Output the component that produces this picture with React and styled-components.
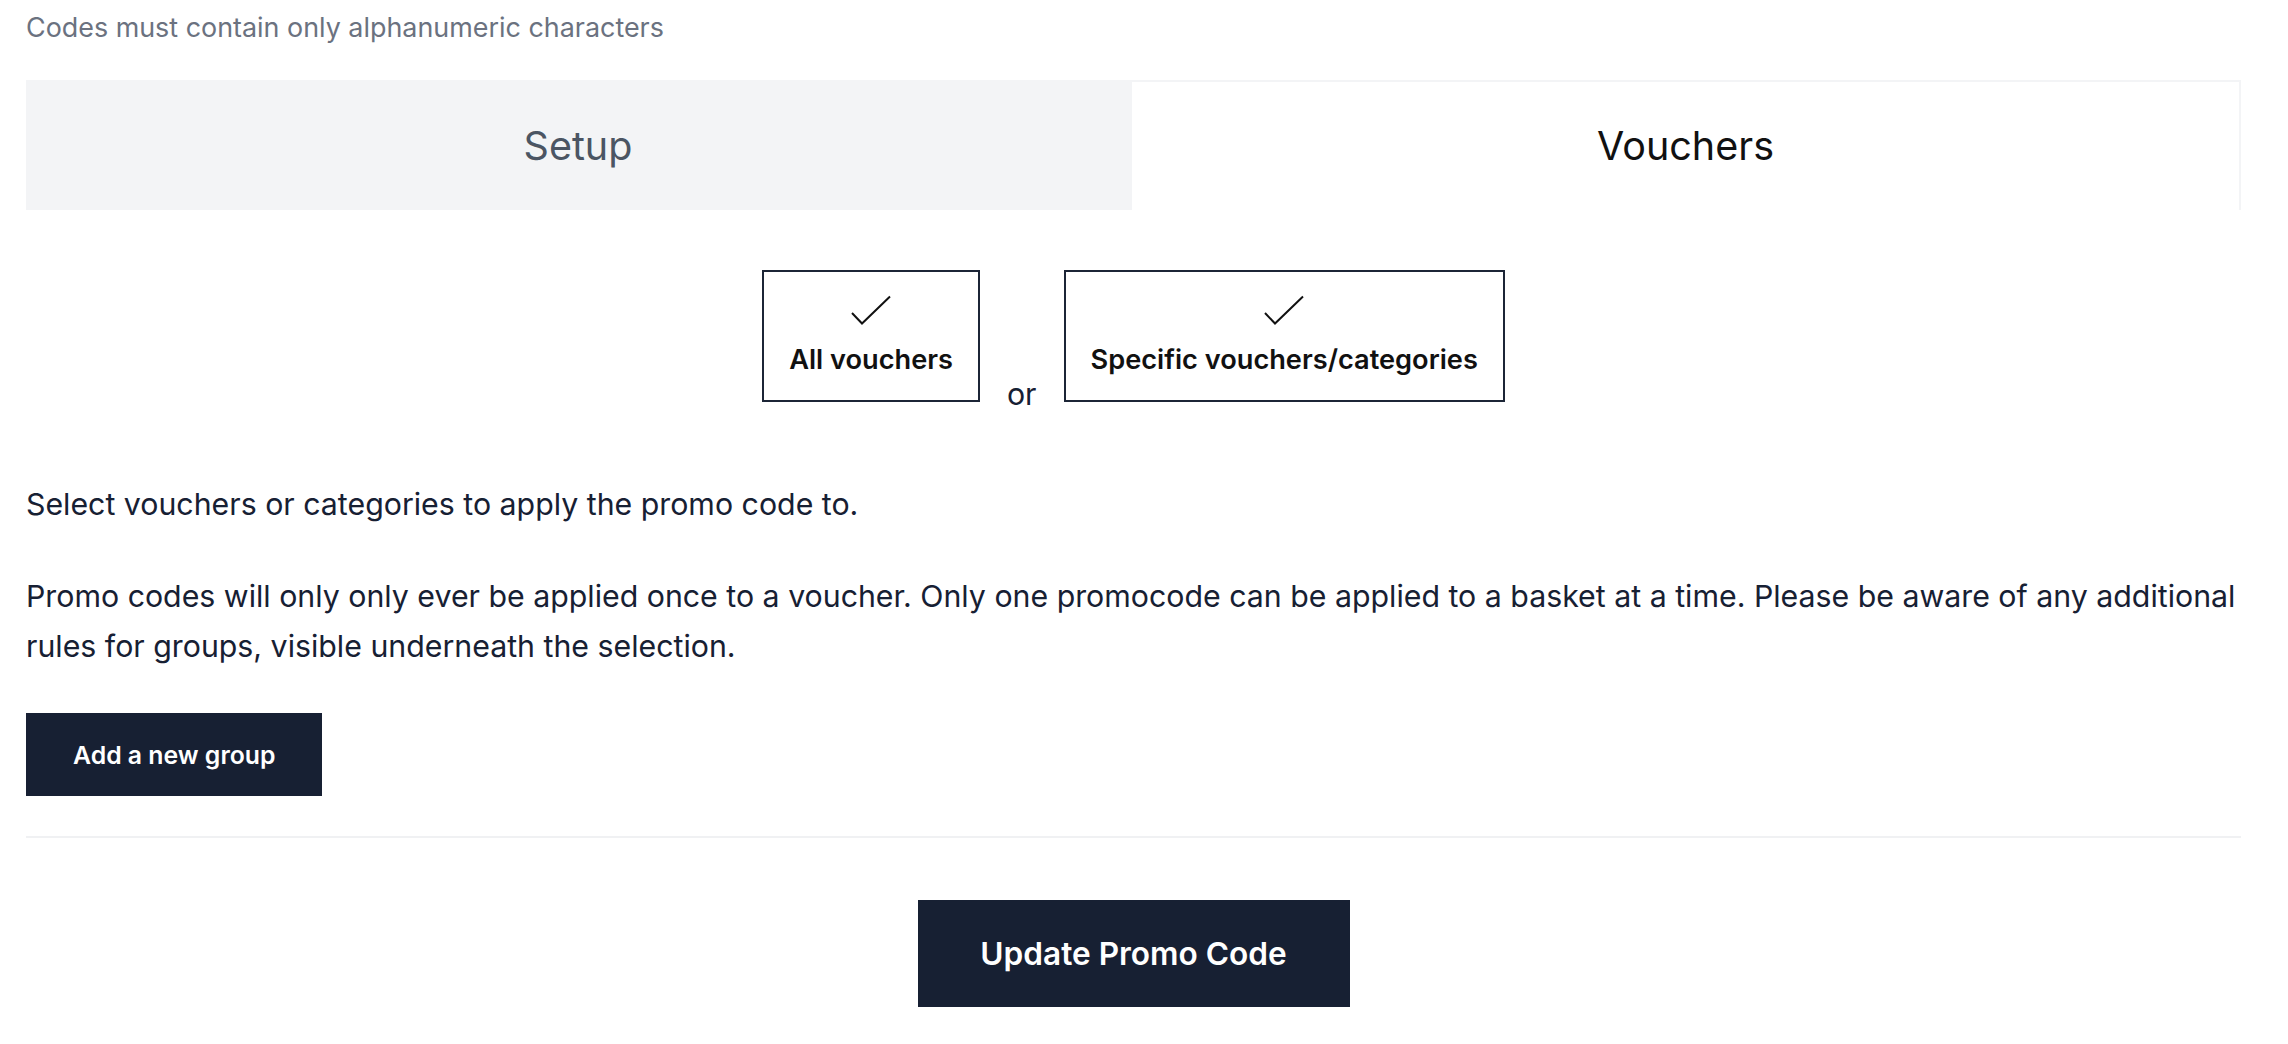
import styled, { createGlobalStyle } from 'styled-components';

const GlobalStyle = createGlobalStyle`
    html, body {
        margin: 0;
        padding: 0;
        background: #ffffff;
    }

    body {
        font-family: Inter, "Noto Sans", "Liberation Sans", sans-serif;
        color: #172033;
    }

    * {
        box-sizing: border-box;
    }
`;

const Page = styled.div`
    width: 2288px;
    padding: 8px 47px 40px 26px;
`;

const Hint = styled.p`
    margin: 0;
    font-size: 26.9px;
    line-height: 38px;
    color: #6b7280;
`;

const Tabs = styled.div`
    display: grid;
    grid-template-columns: 1106px 1fr;
    margin-top: 34px;
`;

const Tab = styled.button`
    height: 130px;
    display: flex;
    align-items: center;
    justify-content: center;
    font-family: inherit;
    font-size: 39.5px;
    padding: 0;
    cursor: pointer;
    background: ${(p) => (p.$active ? '#ffffff' : '#f3f4f6')};
    color: ${(p) => (p.$active ? '#111111' : '#4b5563')};
    border: none;
    border-top: 2px solid ${(p) => (p.$active ? '#f3f4f6' : 'transparent')};
    border-right: 2px solid ${(p) => (p.$active ? '#f3f4f6' : 'transparent')};
`;

const ChoiceRow = styled.div`
    display: flex;
    justify-content: center;
    align-items: flex-end;
    gap: 27px;
    margin-top: 60px;
`;

const ChoiceCard = styled.button`
    display: flex;
    flex-direction: column;
    align-items: center;
    gap: 17px;
    height: 132px;
    padding: 23px 25px 0;
    background: #ffffff;
    border: 2px solid #1c2536;
    cursor: pointer;
    font-family: inherit;

    span {
        font-size: 27.2px;
        line-height: 36px;
        font-weight: 600;
        color: #111111;
        white-space: nowrap;
    }
`;

const Or = styled.span`
    font-size: 30.3px;
    line-height: 36px;
    margin-bottom: -10px;
    color: #172033;
`;

const Text = styled.p`
    margin: ${(p) => p.$top}px 0 0;
    font-size: 30.3px;
    line-height: 50px;
    color: #172033;
`;

const AddButton = styled.button`
    display: block;
    margin-top: 42px;
    height: 83px;
    padding: 0 47px;
    border: none;
    background: #172033;
    color: #ffffff;
    font-family: inherit;
    font-size: 24.8px;
    font-weight: 600;
    cursor: pointer;
`;

const Divider = styled.hr`
    margin: 40px 0 0;
    border: none;
    height: 2px;
    background: #f0f1f3;
`;

const Footer = styled.div`
    display: flex;
    justify-content: center;
    margin-top: 62px;
`;

const UpdateButton = styled.button`
    height: 107px;
    width: 432px;
    border: none;
    background: #172033;
    color: #ffffff;
    font-family: inherit;
    font-size: 31.6px;
    font-weight: 600;
    cursor: pointer;
`;

function Check() {
    return (
        <svg width="40" height="30" viewBox="0 0 40 30" fill="none">
            <path d="M1 18 L11 28.5 L39 1.5" stroke="#111111" strokeWidth="2" />
        </svg>
    );
}

export default function App() {
    return (
        <>
            <GlobalStyle />
            <Page>
                <Hint>Codes must contain only alphanumeric characters</Hint>

                <Tabs>
                    <Tab>Setup</Tab>
                    <Tab $active>Vouchers</Tab>
                </Tabs>

                <ChoiceRow>
                    <ChoiceCard>
                        <Check />
                        <span>All vouchers</span>
                    </ChoiceCard>
                    <Or>or</Or>
                    <ChoiceCard>
                        <Check />
                        <span>Specific vouchers/categories</span>
                    </ChoiceCard>
                </ChoiceRow>

                <Text $top={77}>Select vouchers or categories to apply the promo code to.</Text>
                <Text $top={42}>
                    Promo codes will only only ever be applied once to a voucher. Only one promocode can be applied to a
                    basket at a time. Please be aware of any additional rules for groups, visible underneath the selection.
                </Text>

                <AddButton>Add a new group</AddButton>
                <Divider />

                <Footer>
                    <UpdateButton>Update Promo Code</UpdateButton>
                </Footer>
            </Page>
        </>
    );
}
